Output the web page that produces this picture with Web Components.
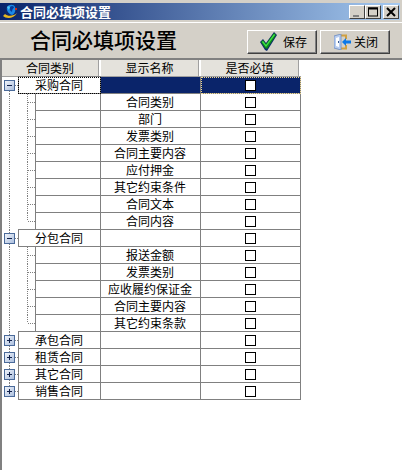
<!DOCTYPE html>
<html>
<head>
<meta charset="utf-8">
<style>
  html, body { margin: 0; height: 100%; background: #fff; }
  body { font-family: "Noto Sans CJK SC", "Liberation Sans", sans-serif; font-size: 12px; color: #000; overflow: hidden; }
</style>
</head>
<body>
<app-window>
  <title-bar slot="title">合同必填项设置</title-bar>
  <tool-bar slot="tools" heading="合同必填项设置">
    <tool-button style="--gap: 6px; --pad: 12px">
      <svg slot="icon" width="17" height="19" viewBox="0 0 17 19">
        <path d="M0 10 L3 7 L6 11 L14 0 L17 3 L7 19 L5 18 Z" fill="#0a2a6a"/>
        <path d="M1 10 L3 8 L6 12 L14 1 L16 3 L7 17 L5 16 Z" fill="#0e8a18"/>
        <path d="M2 10 L3 9 L6 13 L14 2 L15 3 L6 15 Z" fill="#3fe04a"/>
      </svg>
      保存
    </tool-button>
    <tool-button style="--gap: 3px; --pad: 13px">
      <svg slot="icon" width="17" height="16" viewBox="0 0 17 16">
        <path d="M6 1.500 H12 V5 M12 11 V14.500 H6" fill="none" stroke="#d0a040" stroke-width="2"/>
        <path d="M0 2 L7 0 V16 L0 14 Z" fill="#b8cdf0" stroke="#6a8ac0" stroke-width="0.800"/>
        <path d="M2 4 L5 3 V13 L2 12 Z" fill="#fff"/>
        <rect x="4" y="7" width="1" height="2" fill="#3a5a90"/>
        <path d="M8 8 L12 4 V6.500 H17 V9.500 H12 V12 Z" fill="#0a78e8"/>
      </svg>
      关闭
    </tool-button>
  </tool-bar>
  <tree-grid slot="grid"></tree-grid>
</app-window>

<script>
const grupos = [
  { nombre: '采购合同', abierto: true, seleccionado: true, hijos: ['合同类别', '部门', '发票类别', '合同主要内容', '应付押金', '其它约束条件', '合同文本', '合同内容'] },
  { nombre: '分包合同', abierto: true, hijos: ['报送金额', '发票类别', '应收履约保证金', '合同主要内容', '其它约束条款'] },
  { nombre: '承包合同' },
  { nombre: '租赁合同' },
  { nombre: '其它合同' },
  { nombre: '销售合同' },
];

class AppWindow extends HTMLElement {
  constructor() {
    super();
    this.attachShadow({ mode: 'open' }).innerHTML = `
      <style>
        :host { display: flex; flex-direction: column; height: 470px; box-sizing: border-box; background: #fff; }
        .top { background: #d4d0c8; padding: 3px 2px 0 0; }
        .body { flex: 1; border-left: 2px solid #808080; }
      </style>
      <div class="top"><slot name="title"></slot></div>
      <slot name="tools"></slot>
      <div class="body"><slot name="grid"></slot></div>
    `;
  }
}

class TitleBar extends HTMLElement {
  constructor() {
    super();
    this.attachShadow({ mode: 'open' }).innerHTML = `
      <style>
        :host { display: flex; align-items: center; height: 17px; padding: 0 1px 0 3px; color: #fff; font-weight: 700; font-size: 13px; background: linear-gradient(90deg, #0a246a, #a6caf0); }
        .name { margin-left: 1px; flex: 1; line-height: 16px; }
        .btns { display: flex; gap: 0; }
        .btn { width: 16px; height: 14px; box-sizing: border-box; background: #d4d0c8; border: 1px solid; border-color: #fff #404040 #404040 #fff; display: flex; align-items: center; justify-content: center; }
        .btn.close { margin-left: 2px; }
      </style>
      <svg width="16" height="15" viewBox="0 0 16 15">
        <path d="M4 3 C6 0 11 0 12 3 C13 6 12 10 9 11 C6 10 3 7 4 3 Z" fill="#1a8ae8"/>
        <path d="M7 3 C9 1 11 2 11 4 C10 4 9 6 9 8 C7 7 6 5 7 3 Z" fill="#0a3a9a"/>
        <path d="M4 3 C5 2 6 2 7 3 L6 6 Z" fill="#50c8f0"/>
        <rect x="12" y="4" width="2" height="2" fill="#d02818"/>
        <path d="M0 12 C3 15 11 15 14 9 C11 12 5 13 2 10 Z" fill="#e8b820"/>
      </svg>
      <span class="name"><slot></slot></span>
      <div class="btns">
        <div class="btn"><svg width="12" height="10"><rect x="2" y="8" width="6" height="2" fill="#808080"/></svg></div>
        <div class="btn"><svg width="12" height="10"><rect x="1.500" y="1" width="9" height="8" fill="none" stroke="#000"/><rect x="1" y="0.500" width="10" height="2" fill="#000"/></svg></div>
        <div class="btn close"><svg width="12" height="10"><path d="M2 1 L10 9 M10 1 L2 9" stroke="#000" stroke-width="2"/></svg></div>
      </div>
    `;
  }
}

class ToolBar extends HTMLElement {
  constructor() {
    super();
    this.attachShadow({ mode: 'open' }).innerHTML = `
      <style>
        :host { display: flex; align-items: center; height: 38px; box-sizing: border-box; background: #d4d0c8; border-top: 1px solid #fff; border-bottom: 2px solid #808080; margin-top: 2px; padding: 0 12px 0 30px; box-shadow: 0 -2px 0 #d4d0c8; }
        h1 { margin: -3px 0 0; flex: 1; font-size: 21px; font-weight: 500; line-height: 26px; }
        .btns { display: flex; gap: 3px; margin-top: 2px; }
      </style>
      <h1></h1>
      <div class="btns"><slot></slot></div>
    `;
    this.shadowRoot.querySelector('h1').textContent = this.getAttribute('heading');
  }
}

class ToolButton extends HTMLElement {
  constructor() {
    super();
    this.attachShadow({ mode: 'open' }).innerHTML = `
      <style>
        :host { display: flex; align-items: center; gap: var(--gap, 5px); width: 70px; height: 24px; box-sizing: border-box; padding-left: var(--pad, 12px); background: #d4d0c8; border: 1px solid; border-color: #fff #404040 #404040 #fff; box-shadow: inset -1px -1px 0 #808080; font-size: 12px; }
        ::slotted(svg) { flex: none; }
      </style>
      <slot name="icon"></slot><slot></slot>
    `;
  }
}

class GridRow extends HTMLElement {
  constructor() {
    super();
    this.attachShadow({ mode: 'open' }).innerHTML = `
      <style>
        :host { display: grid; grid-template-columns: 99px 100px 100px; height: 17px; }
        .cat { display: flex; min-width: 0; }
        .gut { flex: none; display: block; }
        .name, .req, .txt { display: flex; align-items: center; justify-content: center; box-sizing: border-box; height: 17px; line-height: 16px; border-bottom: 1px solid #808080; border-right: 1px solid #808080; }
        .txt { flex: 1; border-left: 1px solid #808080; padding: 0 1px 1px 0; }
        :host([kind="parent"]) .txt { box-shadow: 0 -1px 0 #808080; }
        .name { padding: 0 1px 1px 0; }
        .box { width: 11px; height: 11px; box-sizing: border-box; border: 1px solid #000; background: #fff; }
        :host([selected]) .name, :host([selected]) .req { background: #0a246a; color: #fff; }
        :host([selected]) .txt { outline: 1px dotted #000; outline-offset: -1px; }
        :host([selected]) .req { outline: 1px dotted #f0d890; outline-offset: -1px; }
      </style>
      <div class="cat"><span class="gut"></span><div class="txt"><slot name="cat"></slot></div></div>
      <div class="name"><slot></slot></div>
      <div class="req"><div class="box"></div></div>
    `;
  }

  connectedCallback() {
    const kind = this.getAttribute('kind');
    const gut = this.shadowRoot.querySelector('.gut');
    const w = kind === 'parent' ? 16 : 33;
    const dots = 'stroke="#808080" stroke-dasharray="1 1"';
    let s = '';
    // la guia vertical de la izquierda
    s += `<path d="M7.500 ${this.hasAttribute('first') ? 8 : 0} V${this.hasAttribute('last') ? 8 : 17}" ${dots}/>`;
    if (kind === 'parent') {
      s += `<path d="M13 8.500 H16" ${dots}/>`;
      s += `<rect x="2.500" y="3.500" width="10" height="10" fill="url(#g)" stroke="#4a6a9a"/>`;
      s += `<path d="M5 8.500 H10" stroke="#10204a"/>`;
      if (!this.hasAttribute('open')) s += `<path d="M7.500 6 V11" stroke="#10204a"/>`;
    } else {
      s += `<path d="M25.500 0 V${this.hasAttribute('last-child') ? 8 : 17}" ${dots}/>`;
      s += `<path d="M26 8.500 H33" ${dots}/>`;
    }
    gut.innerHTML = `<svg width="${w}" height="17" style="display:block"><defs><linearGradient id="g" x1="0" y1="0" x2="1" y2="1"><stop offset="0" stop-color="#f4f7fc"/><stop offset="1" stop-color="#a8bcdc"/></linearGradient></defs>${s}</svg>`;
  }
}

class TreeGrid extends HTMLElement {
  constructor() {
    super();
    this.attachShadow({ mode: 'open' }).innerHTML = `
      <style>
        :host { display: block; width: 299px; }
        .head { display: grid; grid-template-columns: 99px 100px 100px; height: 17px; box-sizing: border-box; border-bottom: 1px solid #a0a0a0; background: #e4e2dc; }
        .head div { display: flex; align-items: center; justify-content: center; line-height: 15px; padding: 0 1px 1px 0; border-right: 2px solid #fff; box-shadow: inset -1px 0 0 #a0a0a0; }
      </style>
      <div class="head"><div>合同类别</div><div>显示名称</div><div>是否必填</div></div>
      <slot></slot>
    `;
  }

  connectedCallback() {
    grupos.forEach((g, i) => {
      const p = this.fila('parent', g.nombre, '');
      if (g.abierto) p.setAttribute('open', '');
      if (g.seleccionado) p.setAttribute('selected', '');
      if (i === 0) p.setAttribute('first', '');
      if (i === grupos.length - 1) p.setAttribute('last', '');
      this.appendChild(p);
      (g.hijos || []).forEach((h, j) => {
        const c = this.fila('child', '', h);
        if (j === g.hijos.length - 1) c.setAttribute('last-child', '');
        this.appendChild(c);
      });
    });
  }

  fila(kind, cat, nombre) {
    const r = document.createElement('grid-row');
    r.setAttribute('kind', kind);
    if (cat) {
      const s = document.createElement('span');
      s.slot = 'cat';
      s.textContent = cat;
      r.appendChild(s);
    }
    if (nombre) r.appendChild(document.createTextNode(nombre));
    return r;
  }
}

customElements.define('app-window', AppWindow);
customElements.define('title-bar', TitleBar);
customElements.define('tool-bar', ToolBar);
customElements.define('tool-button', ToolButton);
customElements.define('grid-row', GridRow);
customElements.define('tree-grid', TreeGrid);
</script>
</body>
</html>
